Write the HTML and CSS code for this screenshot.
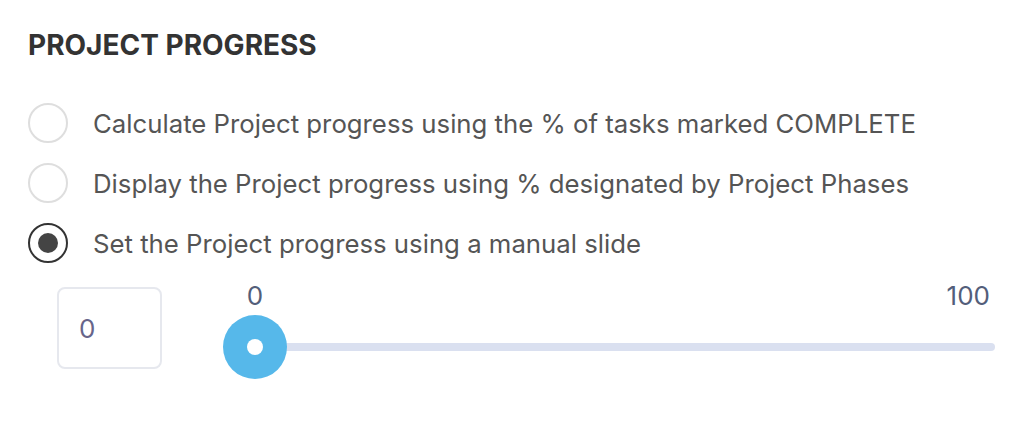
FILE: index.html
```html
<!DOCTYPE html>
<html lang="en">
<head>
    <meta charset="UTF-8">
    <meta name="viewport" content="width=device-width, initial-scale=1.0">
    <title>Project Progress</title>
    <link rel="stylesheet" href="styles.css">
</head>
<body>
    <!-- Project progress settings -->
    <section class="progress-panel">
        <h2>PROJECT PROGRESS</h2>

        <div class="options">
            <label class="option">
                <span class="radio"></span>
                <span class="option-text">Calculate Project progress using the % of tasks marked COMPLETE</span>
            </label>
            <label class="option">
                <span class="radio"></span>
                <span class="option-text">Display the Project progress using % designated by Project Phases</span>
            </label>
            <label class="option">
                <span class="radio checked"></span>
                <span class="option-text">Set the Project progress using a manual slide</span>
            </label>
        </div>

        <!-- Manual slider -->
        <div class="manual">
            <div class="value-box">0</div>
            <div class="slider">
                <div class="slider-labels">
                    <span class="label-min">0</span>
                    <span class="label-max">100</span>
                </div>
                <div class="slider-track">
                    <div class="track-line"></div>
                    <div class="thumb"></div>
                </div>
            </div>
        </div>
    </section>
</body>
</html>
```

FILE: styles.css
```css
body {
    margin: 0;
    font-family: Inter, "Noto Sans", Arial, sans-serif;
    background-color: #fff;
    color: #555;
}
.progress-panel {
    padding: 29px 29px 0 28px;
}
h2 {
    margin: 0;
    font-size: 28px;
    font-weight: 700;
    color: #333;
    line-height: 32px;
}
.options {
    margin-top: 32px;
}
.option {
    display: flex;
    align-items: center;
    gap: 25px;
    height: 60px;
}
.radio {
    width: 40px;
    height: 40px;
    box-sizing: border-box;
    border: 2px solid #dedede;
    border-radius: 50%;
    display: flex;
    align-items: center;
    justify-content: center;
    flex-shrink: 0;
}
.radio.checked {
    border-color: #333;
}
.radio.checked::after {
    content: "";
    width: 20px;
    height: 20px;
    border-radius: 50%;
    background-color: #444;
}
.option-text {
    font-size: 25.75px;
    color: #555;
}
.manual {
    display: flex;
    align-items: flex-start;
    margin-top: 14px;
    padding-left: 29px;
}
.value-box {
    width: 105px;
    height: 82px;
    box-sizing: border-box;
    border: 2px solid #e6e8ee;
    border-radius: 8px;
    padding-left: 20px;
    display: flex;
    align-items: center;
    font-size: 26px;
    color: #67658a;
}
.slider {
    flex: 1;
    margin-left: 61px;
    margin-top: -5px;
}
.slider-labels {
    display: flex;
    justify-content: space-between;
    font-size: 26px;
    color: #535e7a;
    line-height: 28px;
}
.label-min {
    width: 64px;
    text-align: center;
}
.label-max {
    margin-right: 5px;
}
.slider-track {
    position: relative;
    height: 64px;
    margin-top: 5px;
}
.track-line {
    position: absolute;
    left: 32px;
    right: 0;
    top: 28px;
    height: 8px;
    border-radius: 4px;
    background-color: #dae0f0;
}
.thumb {
    position: absolute;
    left: 0;
    top: 0;
    width: 64px;
    height: 64px;
    border-radius: 50%;
    background-color: #56b8ea;
}
.thumb::after {
    content: "";
    position: absolute;
    left: 24px;
    top: 24px;
    width: 16px;
    height: 16px;
    border-radius: 50%;
    background-color: #fff;
}
```
